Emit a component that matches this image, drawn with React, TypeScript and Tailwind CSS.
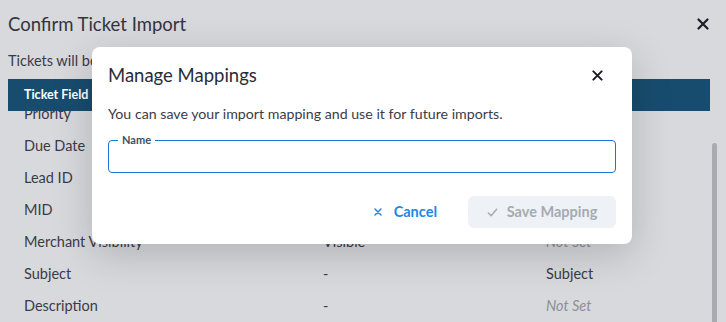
import React from "react";

const rows = [
  { f: "Priority", v: "", m: "" },
  { f: "Due Date", v: "", m: "" },
  { f: "Lead ID", v: "", m: "" },
  { f: "MID", v: "", m: "" },
  { f: "Merchant Visibility", v: "Visible", m: "Not Set" },
  { f: "Subject", v: "-", m: "Subject" },
  { f: "Description", v: "-", m: "Not Set" },
];

function XIcon({ className }: { className?: string }) {
  return (
    <svg viewBox="0 0 12 12" className={className} fill="none" stroke="currentColor" strokeWidth="2.2" strokeLinecap="round">
      <path d="M1.5 1.5L10.5 10.5M10.5 1.5L1.5 10.5" />
    </svg>
  );
}

export default function App() {
  return (
    <div
      className="relative w-[726px] h-[322px] overflow-hidden bg-[#d8d9dd] text-[#34353f]"
      style={{ fontFamily: "Lato, 'Open Sans', sans-serif" }}
    >
      {/* background page */}
      <div className="flex items-center justify-between pl-2 pr-[17px] pt-[11px] h-[36px]">
        <div className="text-[18.5px] leading-[26px] text-[#33343e]">Confirm Ticket Import</div>
        <XIcon className="w-[12px] h-[12px] text-[#1c1d28]" />
      </div>
      <div className="pl-2 mt-[15px] text-[14.5px] leading-[20px] text-[#3a3b45]">Tickets will be</div>
      <div className="flex mt-[8px]">
        <div className="ml-2 w-[702px]">
          <div className="h-[32px] bg-[#184c6e] flex items-center pl-4 text-[12.5px] font-bold text-white">
            Ticket Field
          </div>
          <div className="h-[211px] overflow-hidden">
            <div className="-mt-[13px]">
              {rows.map((r) => (
                <div key={r.f} className="h-[32px] flex items-center text-[14.5px]">
                  <div className="w-[315px] pl-4 text-[#3a3b47]">{r.f}</div>
                  <div className="w-[223px] text-[#3a3b47]">{r.v}</div>
                  <div className={r.m === "Not Set" ? "italic text-[#8d8e95]" : "text-[#3a3b47]"}>{r.m}</div>
                </div>
              ))}
            </div>
          </div>
        </div>
        <div className="ml-[2px] w-[5px] pt-[32px] flex flex-col">
          <div className="mt-[32px] h-[200px] w-[5px] rounded-full bg-[#a9abb2]" />
        </div>
      </div>

      {/* modal */}
      <div className="absolute left-[92px] top-[47px] w-[540px] h-[197px] rounded-[8px] bg-white shadow-[0_10px_40px_rgba(0,0,0,0.18)] px-4 pt-[16px] pb-4 flex flex-col">
        <div className="flex items-center justify-between h-[24px]">
          <div className="text-[18.5px] leading-[24px] text-[#2b2c36]">Manage Mappings</div>
          <XIcon className="w-[11px] h-[11px] mr-[13px] text-[#1c1d28]" />
        </div>
        <div className="mt-[18px] text-[14.2px] leading-[18px] text-[#3b3c46]">
          You can save your import mapping and use it for future imports.
        </div>
        <fieldset className="mt-[11px] h-[39px] border border-[#1976d2] rounded-[4px] px-[9px] pt-0">
          <legend className="px-[4px] text-[11px] font-bold leading-[12px] text-[#3d4e66]">Name</legend>
        </fieldset>
        <div className="mt-auto flex items-center justify-end gap-[31px]">
          <button className="flex items-center gap-[12px] text-[14.5px] font-bold text-[#1e88e5]">
            <XIcon className="w-[8px] h-[8px]" />
            Cancel
          </button>
          <button className="h-[32px] w-[148px] rounded-[6px] bg-[#eef2f6] flex items-center justify-center gap-[9px] text-[14.5px] font-bold text-[#a6aab1]">
            <svg viewBox="0 0 12 12" className="w-[11px] h-[11px]" fill="none" stroke="currentColor" strokeWidth="1.6" strokeLinecap="round" strokeLinejoin="round">
              <path d="M1.5 6.5L4.5 9.5L10.5 2.5" />
            </svg>
            Save Mapping
          </button>
        </div>
      </div>
    </div>
  );
}
